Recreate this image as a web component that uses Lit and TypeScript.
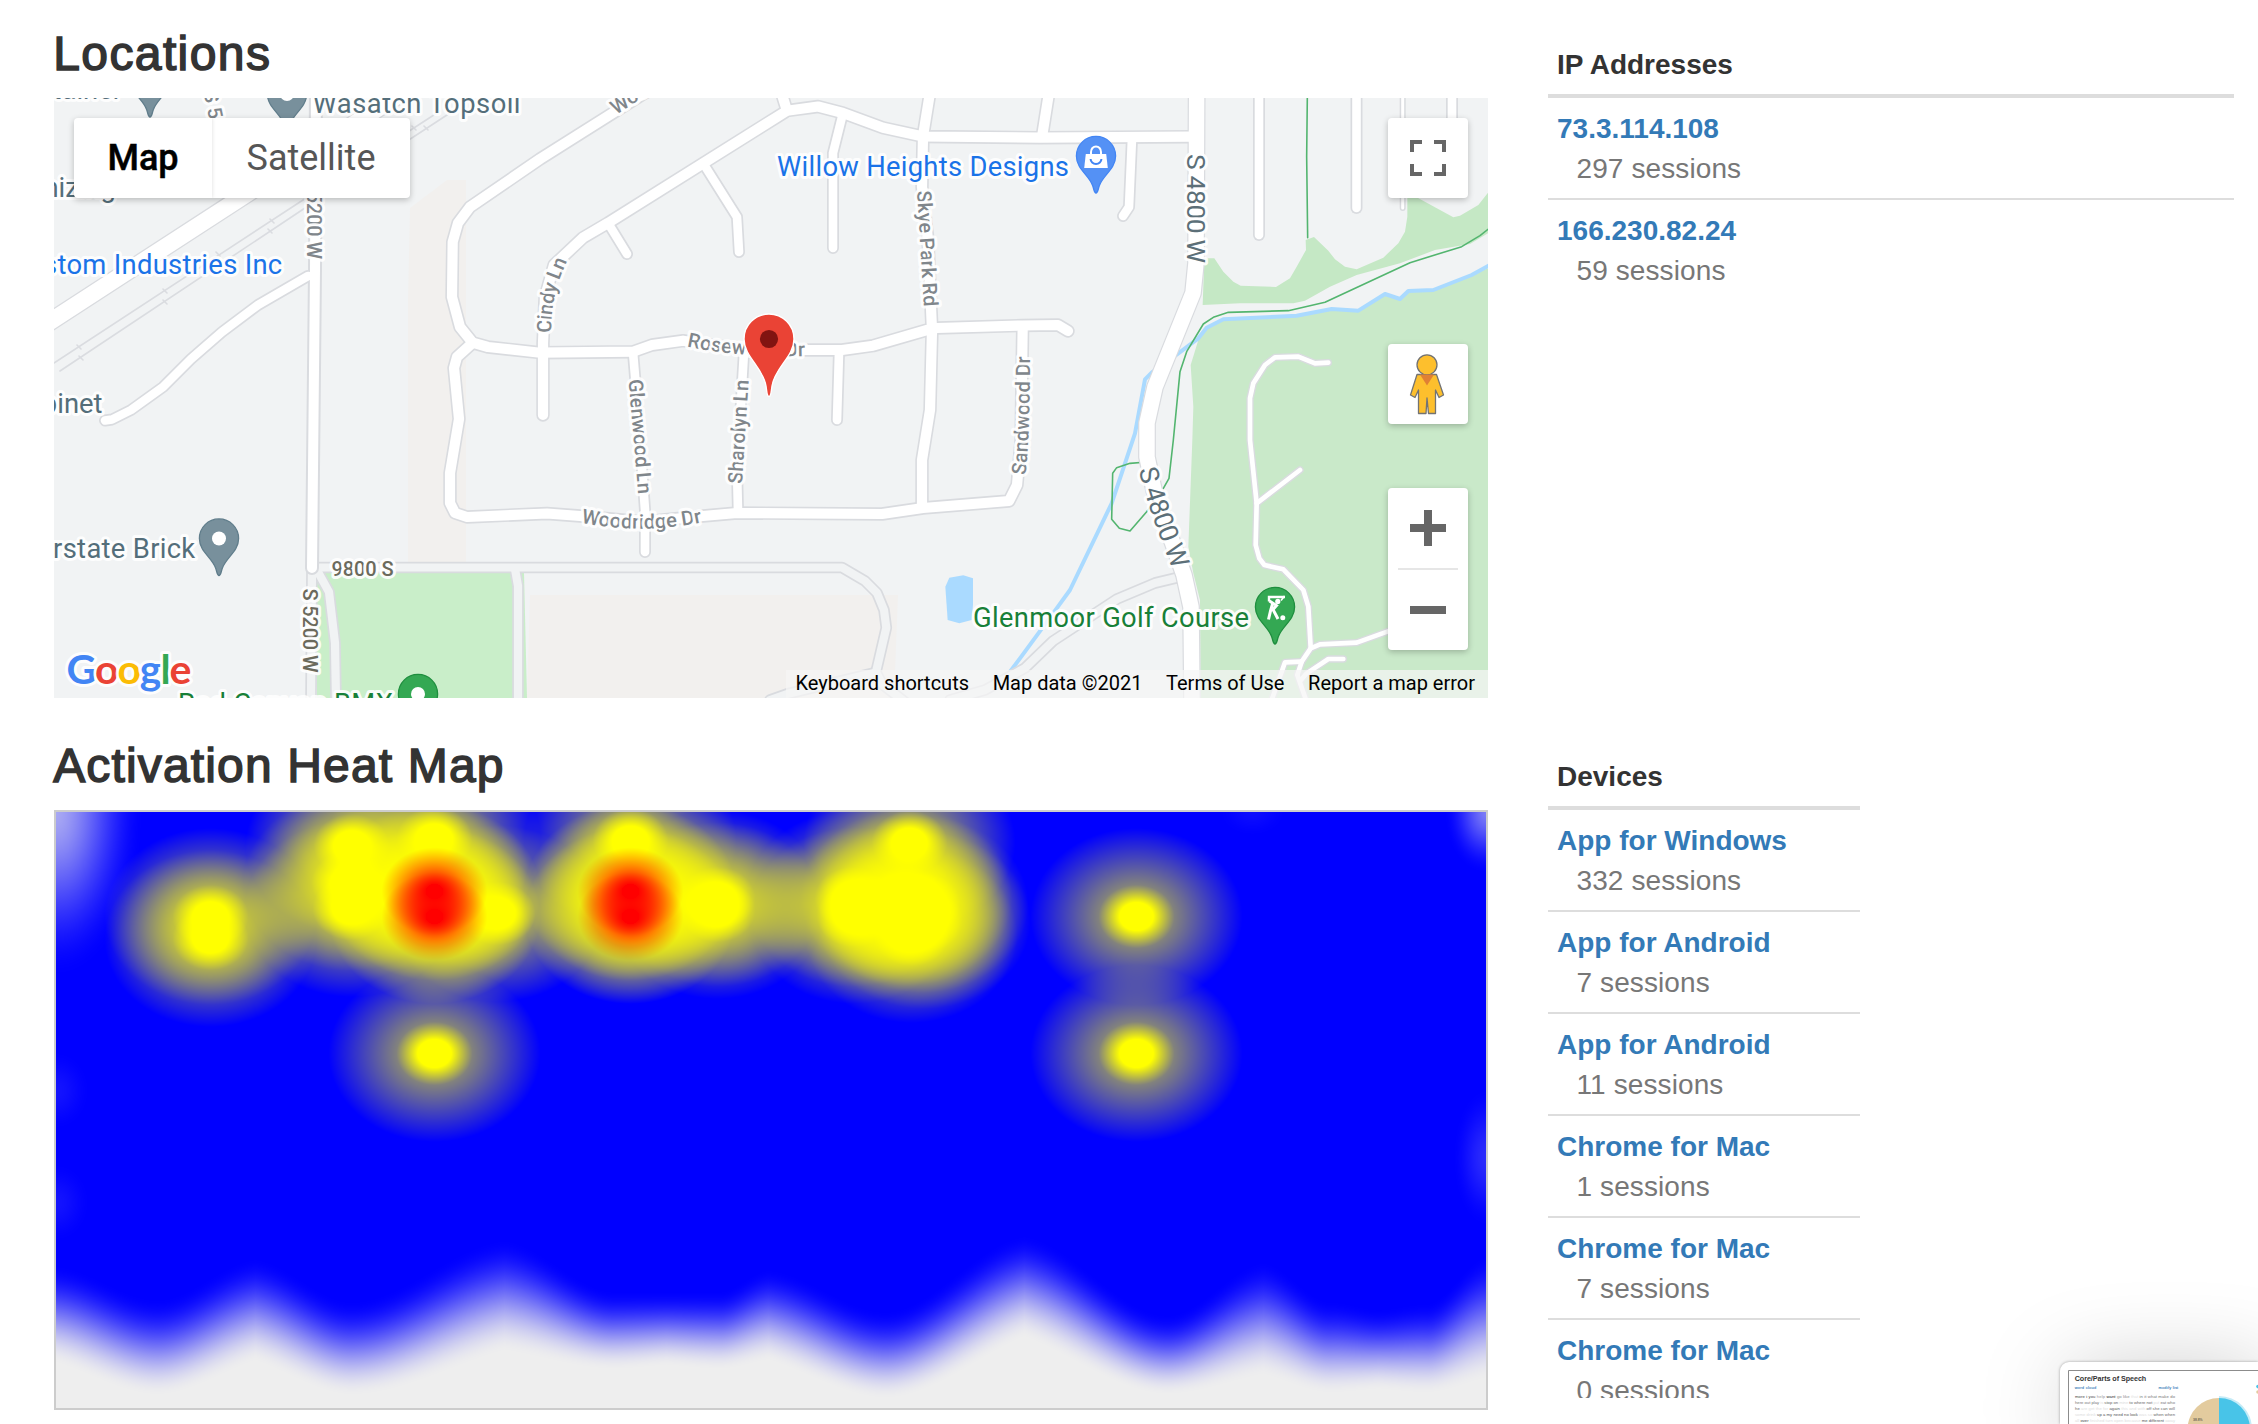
import { LitElement, html, svg, css } from "lit";
import { customElement, property } from "lit/decorators.js";

interface Session {
  name: string;
  count: number;
}

const ADDRESSES: Session[] = [
  { name: "73.3.114.108", count: 297 },
  { name: "166.230.82.24", count: 59 },
];

const DEVICES: Session[] = [
  { name: "App for Windows", count: 332 },
  { name: "App for Android", count: 7 },
  { name: "App for Android", count: 11 },
  { name: "Chrome for Mac", count: 1 },
  { name: "Chrome for Mac", count: 7 },
  { name: "Chrome for Mac", count: 0 },
];

/* ---------- street map ---------- */

const STREETS = [
  "M660 85 L643 94 L540 159 L470 207 L458 223 L452.7 242 L452 297 L460 327 L472.7 342.7 L488 347 L540 352.7 L633 351.7 L652 345 L683 340.7 L745 350 L842 350 L873 345.7 L927 330 L937 328 L1022 325.5 L1058 325 L1068 331",
  "M472.7 342.7 L457 357 L454 368 L459 419 L450 473 L450 503 L455 513 L467 517 L547 513.5 L580 516 L643 522 L703 516 L737 513 L882 514 L923 508 L1009 501 L1017 485 L1021 440 L1022.7 326",
  "M543 415 L543 343 L545 297 L554 265 L583 237.7 L608 223 L787 110.7 L818 106.5 L843 113 L883 127.7 L923 136.5 L1040 137.7 L1190 136.7",
  "M779 85 L787 110.7",
  "M932 80 L923 136 L922 187 L928 240 L932 330 L930 410 L922 460 L922 507",
  "M1051 80 L1042 137",
];
const SIDE_STREETS = [
  "M608 223 L627 254",
  "M703 163 L737 217 L739 252",
  "M843 113 L833 153 L833 248",
  "M633 352 L637 400 L645 510 L645 552",
  "M744 352 L737 470 L738 511",
  "M839 352 L837 420",
  "M1132 138 L1129 207 L1123 216",
  "M1259 85 L1259 235",
  "M1356.5 85 L1356.5 208",
  "M1452 85 L1452 150",
  "M308 276 L258 305 L222 332 L191 359 L163 387 L131 410 L112 419.5 L105 420.5",
];
const LANES = [
  "M312 566 L311 700",
  "M312 567.5 L842 567.5 L865 581 L877 593 L884 610 L886.3 627.7 L876 672 L882 684 L905 702",
  "M318 572 L329 592 L335 643 L336 700",
  "M515 569 L518 586 L518 700",
  "M770 700 L787 694 L874 673",
  "M950 700 L985 690 L1025 668 L1053 641 L1117 599 L1155 583 L1180 577",
];
const CART_PATHS = [
  "M925 8 L885 10 L835 -10 L765 -8 L735 15 L700 70 L690 115 L690 240 L710 430 L707 555 L718 595 L733 615 L790 628 L850 690 L865 740 L872 862",
  "M710 430 L840 330",
  "M1110 812 L1010 848 L900 853 L872 865 L845 905 L832 945 L858 1020",
  "M845 905 L795 907 L755 1020",
  "M970 897 L925 897 L860 940 L843 960",
];
const AVENUE =
  "M1196.7 80 L1196 263 L1193 293 L1155 387 L1147 423 L1147 457 L1154 490 L1184 575 L1191 607 L1192 702";
const PIN =
  "M0 37 C-2 37 -2 33 -3.4 29.5 C-7 19 -19.6 13 -19.6 0 A19.6 19.6 0 1 1 19.6 0 C19.6 13 7 19 3.4 29.5 C2 33 2 37 0 37Z";

@customElement("street-map")
export class StreetMap extends LitElement {
  static styles = css`
    :host { display: block; position: relative; height: 600px; overflow: hidden; font-family: Roboto, "Liberation Sans", sans-serif; }
    .canvas { display: block; width: 1434px; height: 600px; }
    .casing, .fill, .line { fill: none; stroke-linejoin: round; stroke-linecap: round; }
    .casing { stroke: #d9dbdf; }
    .fill { stroke: #fff; }
    .lane { stroke: #f1f3f4; }
    .rail { stroke: #dadce0; stroke-width: 1.6; }
    .trail { stroke: #53b56f; stroke-width: 4.8; }
    .river { stroke: #aadaff; stroke-width: 12; }
    .halo text { paint-order: stroke; stroke: #fff; stroke-width: 6px; stroke-linejoin: round; stroke-opacity: .9; }
    .poi { font-size: 27.4px; }
    .cut { letter-spacing: .3px; }
    .road { font-size: 20px; font-weight: 500; fill: #80868b; }
    .main { font-size: 26.5px; fill: #5c6f78; }
    .olive { fill: #6b6a5c; }
    .slate { fill: #546e7a; }
    .blue { fill: #1a73e8; }
    .green { fill: #188038; }
    .brand { font-family: Lato, sans-serif; font-size: 41px; font-weight: 700; }
    .types { position: absolute; left: 20px; top: 20px; display: flex; height: 80px; background: #fff; border-radius: 4px; box-shadow: 0 2px 6px rgba(0,0,0,.24); font-size: 36px; line-height: 80px; }
    .type { box-sizing: border-box; text-align: center; color: #565656; width: 198px; }
    .type.on { width: 138px; color: #000; font-weight: 500; -webkit-text-stroke: .5px #000; box-shadow: 0 0 4px rgba(0,0,0,.14); clip-path: inset(0 -4px 0 0); }
    .tools { position: absolute; right: 20px; top: 20px; width: 80px; display: flex; flex-direction: column; }
    .tool { display: block; background: #fff; border-radius: 4px; box-shadow: 0 2px 6px rgba(0,0,0,.24); height: 80px; }
    .pegman { margin-top: 146px; }
    .zoom { margin-top: 64px; height: 162px; }
    .legal { position: absolute; right: 0; bottom: 0; height: 28px; width: 702px; box-sizing: border-box; padding: 0 13px 0 9.5px; display: flex; justify-content: space-between; background: rgba(245,245,245,.72); color: #000; font-size: 20px; line-height: 27px; white-space: nowrap; }
  `;

  private pin(x: number, y: number, fill: string, edge: string, glyph: unknown) {
    return svg`<g transform="translate(${x} ${y})"><path d=${PIN} fill=${fill} stroke=${edge} stroke-width="1.3"></path>${glyph}</g>`;
  }

  private strokes(paths: string[], cls: string, width: number) {
    return paths.map((d) => svg`<path class=${cls} d=${d} stroke-width=${width}></path>`);
  }

  render() {
    const hole = svg`<circle r="7" fill="#fff"></circle>`;
    return html`
      <svg class="canvas" viewBox="54 98 1434 600">
        <rect x="54" y="98" width="1434" height="600" fill="#f1f3f4"></rect>
        <path fill="#f2f0ee" d="M410 208 L447 180 H466 V562 H408 V300Z M530 595 H898 L894 698 H527Z"></path>
        <path fill="#c9eec9" d="M317 573 H524 L527 698 H317Z"></path>
        <g transform="translate(1020 90) scale(.33333)">
          <path fill="#c5e8c5" d="M548 645 L553 505 L583 505 L610 545 L640 575 L662 587 L768 591 L810 565 L830 530 L858 480 L857 450 L882 441 L925 482 L945 508 L975 530 L1010 538 L1090 503 L1135 460 L1155 425 L1162 380 L1162 310 L1190 322 L1300 382 L1320 377 L1375 345 L1404 308 L1404 430 L1350 462 L1245 480 L1140 520 L1010 555 L930 590 L855 632 L820 640 L660 640Z"></path>
          <path fill="#c9e9c9" d="M1404 535 L1240 600 L1165 605 L1140 630 L1095 615 L1015 665 L935 658 L830 680 L610 690 L560 715 L535 750 L512 825 L520 950 L517 1050 L505 1370 L520 1450 L540 1530 L542 1824 L1404 1824Z"></path>
          <path class="line river" d="M1410 525 L1355 555 L1240 600 L1165 603 L1140 627 L1095 612 L1015 662 L935 657 L830 677 L610 688 L560 713 L535 745 L475 790 L395 848 L375 868 L345 1030 L275 1240 L150 1500 L110 1555 L0 1705 L-60 1785"></path>
          <path class="line trail" d="M862 20 L860 200 L863 443 M1404 418 L1380 437 L1325 470 L1170 518 L915 637 L805 662 L625 667 L580 682 L550 702 L500 785 L480 845 L460 1050 L447 1165 L430 1195 L380 1265 L330 1323 L298 1315 L275 1288 L278 1150 L290 1133 L330 1120 L380 1116"></path>
        </g>
        <g transform="translate(540 360) scale(.33333)">
          <path fill="#aadaff" d="M1228 653 L1270 646 L1299 655 L1299 735 L1295 780 L1258 790 L1223 780 L1216 680Z"></path>
        </g>
        <g transform="translate(1020 360) scale(.33333)">
          ${this.strokes(CART_PATHS, "casing", 22)}
          ${this.strokes(CART_PATHS, "fill", 14)}
        </g>

        <path class="line rail" d="M54 363 L303 200 L440 111 M60 371 L305 208 L450 113"></path>
        <path class="line rail" d="M77 345 l4 4 M79 356 l4 4 M163 289 l4 4 M163 300 l4 4 M270 219 l4 4 M268 229 l4 4 M412 126 l4 4 M424 126 l4 4 M216 252 l4 4"></path>

        ${this.strokes(LANES, "casing", 11.6)}
        ${this.strokes(LANES, "fill lane", 8.2)}
        <path class="casing" d="M48 323 L240 198.3 L440 68" stroke-width="19"></path>
        ${this.strokes(STREETS, "casing", 13.4)}
        ${this.strokes(SIDE_STREETS, "casing", 12)}
        <path class="casing" d="M316 85 L315 270 L312 568" stroke-width="14"></path>
        <path class="casing" d="M1402.7 85 V208" stroke-width="6"></path>
        <path class="casing" d=${AVENUE} stroke-width="17.8"></path>
        <path class="fill" d="M48 323 L240 198.3 L440 68" stroke-width="16.5"></path>
        ${this.strokes(STREETS, "fill", 10.2)}
        ${this.strokes(SIDE_STREETS, "fill", 8.6)}
        <path class="fill" d="M316 85 L315 270 L312 568" stroke-width="10"></path>
        <path class="fill" d="M1402.7 85 V208" stroke-width="3"></path>
        <path class="fill" d=${AVENUE} stroke-width="15.4"></path>

        <defs>
          <path id="cindy" d="M551.5 333 C550.5 305 556 285 568 259"></path>
          <path id="rosewood" d="M687 346.5 Q740 358 810 356"></path>
          <path id="woodridge" d="M581 522.5 Q642 535 704 522"></path>
          <path id="sandwood" d="M1025.5 475 Q1030 440 1030 350"></path>
          <path id="avenue" d="M1138.5 470 Q1150 515 1175 575"></path>
          <path id="skye" d="M917 191 L924 309"></path>
          <path id="glenwood" d="M628.5 380 Q632 420 638.5 497"></path>
          <path id="sharolyn" d="M742 484 L749 376"></path>
        </defs>
        <g class="halo">
          <text class="road" textLength="75"><textPath href="#cindy">Cindy Ln</textPath></text>
          <text class="road" textLength="119"><textPath href="#rosewood">Rosewood Dr</textPath></text>
          <text class="road" textLength="122"><textPath href="#woodridge">Woodridge Dr</textPath></text>
          <text class="road" textLength="119"><textPath href="#sandwood">Sandwood Dr</textPath></text>
          <text class="road" textLength="116"><textPath href="#skye">Skye Park Rd</textPath></text>
          <text class="road" textLength="115"><textPath href="#glenwood">Glenwood Ln</textPath></text>
          <text class="road" textLength="104"><textPath href="#sharolyn">Sharolyn Ln</textPath></text>
          <text class="road" transform="translate(307 175) rotate(90)" textLength="84">S 5200 W</text>
          <text class="road" transform="translate(203.5 92) rotate(78)">S 5600 W</text>
          <text class="road olive" transform="translate(303 588.5) rotate(90)" textLength="84">S 5200 W</text>
          <text class="road olive" x="331.5" y="576" textLength="62">9800 S</text>
          <text class="road" transform="translate(616 115) rotate(-33)">Woodridge</text>
          <text class="main" transform="translate(1187 154) rotate(90)" textLength="109">S 4800 W</text>
          <text class="main" textLength="106"><textPath href="#avenue">S 4800 W</textPath></text>
          <text class="poi blue" x="777" y="176" textLength="292">Willow Heights Designs</text>
          <text class="poi slate" x="312.5" y="112.5" textLength="208">Wasatch Topsoil</text>
          <text class="poi slate" x="122" y="99" text-anchor="end">tainer</text>
          <text class="poi slate" x="116" y="197.3" text-anchor="end">anizing</text>
          <text class="poi blue cut" x="282.5" y="273.5" text-anchor="end">Custom Industries Inc</text>
          <text class="poi slate" x="102.5" y="412.5" text-anchor="end">Cabinet</text>
          <text class="poi slate cut" x="195.5" y="558" text-anchor="end">Interstate Brick</text>
          <text class="poi green" x="973" y="626.6" textLength="276">Glenmoor Golf Course</text>
          <text class="poi green" x="178" y="712.5" textLength="215">Rad Canyon BMX</text>
          <text class="brand" x="66.5" y="683.5" textLength="125"><tspan fill="#4285f4">G</tspan><tspan fill="#ea4335">o</tspan><tspan fill="#fbbc05">o</tspan><tspan fill="#4285f4">g</tspan><tspan fill="#34a853">l</tspan><tspan fill="#ea4335">e</tspan></text>
        </g>

        ${this.pin(150, 80, "#78909c", "#607d8b", hole)}
        ${this.pin(287, 94, "#78909c", "#607d8b", hole)}
        ${this.pin(219, 538.5, "#78909c", "#607d8b", hole)}
        ${this.pin(418, 694, "#34a853", "#1e8e3e", hole)}
        ${this.pin(1096, 156, "#5491f5", "#4285f4", svg`
          <path d="M-10.2 -2 H10.2 L11.8 12 H-11.8Z" fill="#fff"></path>
          <path d="M-5 -1 V-4 A5 5.6 0 0 1 5 -4 V-1" fill="none" stroke="#fff" stroke-width="2"></path>
          <path d="M-5.4 3 A5.4 5 0 0 0 5.4 3" fill="none" stroke="#4285f4" stroke-width="2"></path>`)}
        ${this.pin(1275, 607, "#34a853", "#1e8e3e", svg`
          <path d="M-6 -5.5 V-10 H10" fill="none" stroke="#fff" stroke-width="2.4"></path>
          <path d="M9.5 -11 L6 -6.5" stroke="#fff" stroke-width="1.6"></path>
          <circle cx="2.8" cy="-5.6" r="2.6" fill="#fff"></circle>
          <path d="M-5.5 -6 L1.5 -1.5 L-2 2.5 L3 12 M-2.5 -3 L-4.5 4 L-6.5 12.5" fill="none" stroke="#fff" stroke-width="3"></path>
          <circle cx="7.8" cy="10.8" r="2.5" fill="#fff"></circle>`)}

        <g transform="translate(769 339)">
          <path d="M0 57.5 C-2.3 57.5 -2 53 -3 47 C-6 28 -25 18 -25 0 A25 25 0 1 1 25 0 C25 18 6 28 3 47 C2 53 2.3 57.5 0 57.5Z" fill="#ea4335" stroke="#fff" stroke-width="1.4"></path>
          <circle r="9.1" fill="#811411"></circle>
        </g>
      </svg>

      <div class="types"><div class="type on">Map</div><div class="type">Satellite</div></div>
      <div class="tools">
        <svg class="tool" viewBox="0 0 80 80"><path d="M24 34 V24 H34 M46 24 H56 V34 M56 46 V56 H46 M34 56 H24 V46" fill="none" stroke="#666" stroke-width="4"></path></svg>
        <svg class="tool pegman" viewBox="0 0 80 80">
          <g stroke="#737373" stroke-width="1.3" fill="#fdbf2d" stroke-linejoin="round">
            <path d="M29 30.5 H48.5 L55.5 51 L51 53.5 L47.5 46 V69.5 H40.5 L39 54 L38 69.5 H30.5 V46 L27 53.5 L22.5 51Z"></path>
            <circle cx="39" cy="20.8" r="10"></circle>
          </g>
          <path d="M32 30.6 H46 L39 41.5Z" fill="#e08034"></path>
        </svg>
        <svg class="tool zoom" viewBox="0 0 80 162">
          <path d="M22 40 H58 M40 22 V58 M22 122 H58" stroke="#666" stroke-width="8"></path>
          <path d="M10 81 H70" stroke="#e6e6e6" stroke-width="2"></path>
        </svg>
      </div>
      <div class="legal"><span>Keyboard shortcuts</span><span>Map data ©2021</span><span>Terms of Use</span><span>Report a map error</span></div>
    `;
  }
}

/* ---------- activation heat map ---------- */

type Point = [number, number, number];

/* x, y, repeat count, in pixels of the plot area */
const WARM: Point[] = [
  [154, 104, 1], [154, 126, 1],
  [295, 33, 1], [293, 70, 1], [294, 96, 1],
  [378, 26, 1], [378, 80, 2], [378, 103, 2], [441, 101, 1],
  [574, 28, 1], [574, 80, 2], [574, 103, 2], [661, 86, 1], [661, 98, 1],
  [853, 30, 1], [796, 86, 1], [798, 103, 1], [855, 122, 1], [850, 85, 1], [866, 92, 1], [868, 108, 1],
  [378, 241, 1], [1080, 104, 1], [1080, 241, 1],
];
const HOT: Point[] = [
  [378, 79, 1], [378, 104, 1], [574, 79, 1], [574, 104, 1],
];
/* x, last fully covered y, first uncovered y; crests and dips alternate */
const FLOOR: Point[] = [
  [0, 466, 552], [101, 500, 584], [199, 459, 550], [295, 502, 584], [448, 440, 540],
  [558, 492, 558], [610, 492, 554], [663, 492, 558], [712, 470, 549], [829, 512, 587],
  [968, 436, 526], [1111, 516, 583], [1207, 462, 564], [1274, 502, 582], [1322, 510, 578], [1370, 504, 582], [1430, 456, 568],
];
const SQUASH = 1.2;

const clamp = (t: number) => Math.min(1, Math.max(0, t));
const smooth = (t: number) => {
  const c = clamp(t);
  return c * c * (3 - 2 * c);
};

function warmth(r: number): number {
  if (r < 16) return 1;
  if (r < 38) return 1 - ((r - 16) / 22) * 0.5;
  if (r < 106) return 0.5 * (1 - (r - 38) / 68);
  return 0;
}

function heat(r: number): number {
  return r < 9 ? 1 : 0.96 * Math.max(0, 1 - (r - 9) / 44) ** 1.08;
}

function union(points: Point[], x: number, y: number, f: (r: number) => number): number {
  let rest = 1;
  for (const [px, py, n] of points) {
    const dx = x - px;
    const dy = (y - py) * SQUASH;
    if (dx > 106 || dx < -106 || dy > 106 || dy < -106) continue;
    const v = 1 - f(Math.hypot(dx, dy));
    rest *= n === 2 ? v * v : v;
  }
  return 1 - rest;
}

@customElement("heat-map")
export class HeatMap extends LitElement {
  static styles = css`
    :host { display: block; box-sizing: border-box; height: 600px; border: 2px solid #ccc; background: #eee; }
    .plot { display: block; width: 1430px; height: 596px; }
  `;

  firstUpdated() {
    const canvas = this.renderRoot.querySelector("canvas")!;
    const ctx = canvas.getContext("2d")!;
    const { width: w, height: h } = canvas;
    const image = ctx.createImageData(w, h);
    const px = image.data;
    let seg = 0;
    for (let x = 0; x < w; x++) {
      while (seg < FLOOR.length - 2 && x > FLOOR[seg + 1][0]) seg++;
      const a = FLOOR[seg];
      const b = FLOOR[seg + 1];
      const u = clamp((x - a[0]) / (b[0] - a[0]));
      const arc = b[2] < a[2] ? u ** 1.8 : 1 - (1 - u) ** 1.8;
      const soft = smooth(u);
      const solid = a[1] + (b[1] - a[1]) * (soft * 0.85 + arc * 0.15) - 14;
      const end = a[2] + (b[2] - a[2]) * (soft * 0.45 + arc * 0.55);
      for (let y = 0; y < h; y++) {
        let cold = 1 - smooth((y - solid) / (end - solid));
        cold *= 0.28 + 0.72 * smooth(0.08 + Math.hypot(x / 95, y / 180));
        cold *= 0.45 + 0.55 * smooth(0.12 + Math.hypot((w - x) / 48, y / 70));
        cold *= 0.82 + 0.18 * smooth(Math.hypot((w - x) / 34, (y - 345) / 70));
        cold *= 0.92 + 0.08 * smooth(Math.hypot(x / 34, (y - 278) / 40));
        cold *= 0.92 + 0.08 * smooth(Math.hypot(x / 34, (y - 390) / 40));
        cold *= 0.95 + 0.05 * smooth(Math.hypot((x - 1196) / 34, y / 24));
        const warm = y < 335 ? Math.min(1, union(WARM, x, y, warmth) * 1.02) : 0;
        const hot = y < 160 ? union(HOT, x, y, heat) : 0;
        let r = 238 * (1 - cold);
        let g = r;
        let bl = 238 + 17 * cold;
        r += (255 - r) * warm;
        g += (255 - g) * warm;
        bl -= bl * warm;
        g -= g * hot;
        bl -= bl * hot;
        const i = (y * w + x) * 4;
        px[i] = r;
        px[i + 1] = g;
        px[i + 2] = bl;
        px[i + 3] = 255;
      }
    }
    ctx.putImageData(image, 0, 0);
  }

  render() {
    return html`<canvas class="plot" width="1430" height="596"></canvas>`;
  }
}

/* ---------- session tables ---------- */

@customElement("session-table")
export class SessionTable extends LitElement {
  @property() heading = "";
  @property({ attribute: false }) rows: Session[] = [];

  static styles = css`
    :host { display: block; font: 28px/40px "Helvetica Neue", "Liberation Sans", Arial, sans-serif; }
    .head { padding: 11px 9px 9px; border-bottom: 4px solid #ddd; color: #333; font-weight: 700; }
    .row { padding: 11px 9px 9px; }
    .row + .row { border-top: 2px solid #ddd; }
    .name { color: #337ab7; font-weight: 700; }
    .count { padding-left: 19.5px; color: #777; letter-spacing: .1px; }
  `;

  render() {
    return html`
      <div class="head">${this.heading}</div>
      ${this.rows.map((r) => html`<div class="row"><div class="name">${r.name}</div><div class="count">${r.count} sessions</div></div>`)}
    `;
  }
}

/* ---------- floating preview ---------- */

const CLOUD: [number, number, [string, string][]][] = [
  [2075, 1397.5, [["more", "#444"], [" i ", "#111"], ["you", "#444"], [" help ", "#999"], ["want", "#222"], [" go like ", "#888"], ["that", "#e2e2e2"], [" in it what make do", "#777"]]],
  [2075, 1403.7, [["here out play", "#777"], [" is ", "#ddd"], ["stop on", "#666"], [" mine ", "#ddd"], ["to where not", "#666"], [" put ", "#ddd"], ["eat who", "#777"]]],
  [2075, 1409.9, [["he", "#666"], [" are get the for ", "#ddd"], ["again", "#555"], [" this and with ", "#ddd"], ["off she can will", "#666"]]],
  [2075, 1416, [["some drink ", "#ddd"], ["up a my need no look", "#555"], [" was so ", "#ddd"], ["when when", "#666"]]],
  [2075, 1422, [["all ", "#ddd"], ["over", "#444"], [" finished turn open because ", "#ddd"], ["me different", "#555"], [" away", "#ddd"]]],
];

@customElement("preview-card")
export class PreviewCard extends LitElement {
  static styles = css`
    :host { display: block; height: 62px; background: #fff; border-top-left-radius: 9px; box-shadow: 0 0 3px rgba(0,0,0,.35), 10px 14px 90px rgba(0,0,0,.27); font-family: "Liberation Sans", Arial, sans-serif; }
    .art { display: block; width: 198px; height: 62px; }
    .title { font-size: 7.2px; font-weight: 700; fill: #333; }
    .link { font-size: 4px; fill: #337ab7; stroke: #337ab7; stroke-width: .1; }
    .words { font-size: 4.2px; }
  `;

  render() {
    return html`
      <svg class="art" viewBox="2060 1362 198 62">
        <path d="M2068.5 1424 V1370.5 H2258" fill="none" stroke="#8c8c8c" stroke-width="1"></path>
        <text class="title" x="2074.7" y="1380.8" textLength="71.5">Core/Parts of Speech</text>
        <text class="link" x="2074.7" y="1389.3" textLength="21.5">word cloud</text>
        <text class="link" x="2158.4" y="1389.3" textLength="19.8">modify list</text>
        ${CLOUD.map(([x, y, words]) => svg`<text class="words" x=${x} y=${y} textLength="100" xml:space="preserve">${words.map(([t, c]) => svg`<tspan fill=${c}>${t}</tspan>`)}</text>`)}
        <path d="M2219 1396 A33 33 0 0 1 2252 1429 H2219Z" fill="#c4ebf7"></path>
        <path d="M2219 1398 A31 31 0 0 1 2250 1429 H2219Z" fill="#48c4e8"></path>
        <path d="M2219 1398 A31.5 31.5 0 0 0 2187.5 1429 H2219Z" fill="#e3cb9e"></path>
        <text x="2193" y="1420.6" font-size="3.4" fill="#333">38.8%</text>
        <circle cx="2258" cy="1386.6" r="1.8" fill="#48c4e8"></circle>
        <circle cx="2258" cy="1392" r="1.8" fill="#e3cb9e"></circle>
      </svg>
    `;
  }
}

/* ---------- page ---------- */

@customElement("app-root")
export class AppRoot extends LitElement {
  static styles = css`
    :host { display: block; position: relative; width: 2258px; height: 1424px; overflow: hidden; background: #fff; font-family: "Helvetica Neue", "Liberation Sans", Arial, sans-serif; }
    .page { display: grid; grid-template-columns: 1434px 686px; grid-template-rows: 712px 712px; column-gap: 60px; padding-left: 54px; }
    .title { margin: 0 0 18px; padding-top: 27px; font-size: 48px; line-height: 53px; font-weight: 400; color: #333; -webkit-text-stroke: 1.5px #333; letter-spacing: 1.15px; text-indent: -.8px; }
    .title.loose { letter-spacing: 1.4px; }
    .side { padding-top: 34px; }
    .devices { width: 312px; height: 652px; overflow: hidden; }
    .preview { position: absolute; right: 0; bottom: 0; width: 198px; }
  `;

  render() {
    return html`
      <main class="page">
        <section><h2 class="title loose">Locations</h2><street-map></street-map></section>
        <aside class="side"><session-table heading="IP Addresses" .rows=${ADDRESSES}></session-table></aside>
        <section><h2 class="title">Activation Heat Map</h2><heat-map></heat-map></section>
        <aside class="side"><session-table class="devices" heading="Devices" .rows=${DEVICES}></session-table></aside>
      </main>
      <preview-card class="preview"></preview-card>
    `;
  }
}
